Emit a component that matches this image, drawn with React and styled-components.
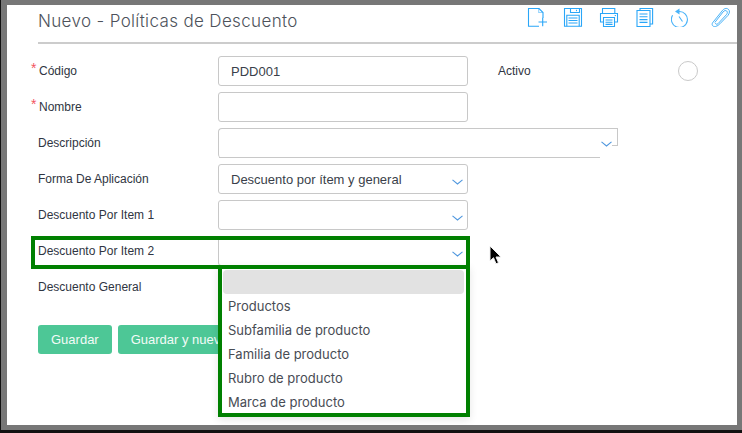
import React from 'react'
import styled, { createGlobalStyle } from 'styled-components'

const Global = createGlobalStyle`
  html, body {
    margin: 0;
    padding: 0;
    background: #111;
  }
  * { box-sizing: border-box; }
`

const Frame = styled.div`
  width: 741px;
  height: 430px;
  margin-left: 1px;
  padding: 5px 5px 5px 6px;
  background: #777;
`

const Page = styled.div`
  position: relative;
  height: 420px;
  background: #fff;
  overflow: hidden;
  font-family: "Liberation Sans", Arial, sans-serif;
`

const Header = styled.header`
  display: flex;
  justify-content: space-between;
  height: 39px;
  margin-left: 31px;
  border-bottom: 2px solid #ccc;
`

const Title = styled.h1`
  margin: 6px 0 0;
  font-family: "Inter", sans-serif;
  font-size: 17px;
  line-height: 21px;
  font-weight: 300;
  letter-spacing: 0.35px;
  color: #4d525b;
`

const Toolbar = styled.div`
  display: flex;
  gap: 16px;
  padding: 2px 6px 0 0;
  color: #2aa6f8;
  svg { display: block; }
`

const Form = styled.div`
  display: flex;
  flex-direction: column;
  gap: 6px;
  padding: 12px 0 0 31px;
`

const Row = styled.div`
  display: flex;
  align-items: center;
  height: 30px;
`

const Label = styled.label`
  position: relative;
  width: 180px;
  font-size: 12px;
  line-height: 16px;
  padding-left: ${(p) => (p.$required ? 1 : 0)}px;
  color: #2f3542;

  ${(p) => p.$required && `
    &::before {
      content: '*';
      position: absolute;
      left: -7px;
      top: -3px;
      color: #f2555f;
      font-size: 14px;
    }
  `}
`

const Field = styled.div`
  position: relative;
  display: flex;
  align-items: center;
  width: 250px;
  height: 30px;
  padding-left: 12px;
  border: 1px solid #c8c8c8;
  border-radius: 3px;
  font-size: 13px;
  color: #3a3f4a;
`

const WideField = styled(Field)`
  width: 400px;
  border-right: 0;
  border-bottom: 0;
  border-radius: 4px 0 0 4px;

  &::before {
    content: '';
    position: absolute;
    right: 0;
    top: 0;
    width: 1px;
    height: 17px;
    background: #c8c8c8;
  }
  &::after {
    content: '';
    position: absolute;
    left: 0;
    right: 18px;
    bottom: 0;
    height: 1px;
    background: #c8c8c8;
  }
  & > span {
    position: absolute;
    right: 0;
    top: 16px;
    width: 6px;
    height: 1px;
    background: #c8c8c8;
  }
`

const Plain = styled.div`
  width: 250px;
  height: 30px;
`

const Chevron = styled.svg`
  position: absolute;
  right: ${(p) => p.$right}px;
  top: ${(p) => p.$top}px;
  color: #4f97de;
`

const ActivoLabel = styled.span`
  margin-left: 30px;
  width: 180px;
  font-size: 12px;
  color: #2f3542;
`

const Radio = styled.span`
  width: 20px;
  height: 20px;
  border: 1px solid #c9c9c9;
  border-radius: 50%;
  background: #fff;
`

const Buttons = styled.div`
  display: flex;
  gap: 6px;
  padding: 23px 0 0 31px;
`

const Button = styled.button`
  height: 29px;
  padding: 0 13px;
  border: 0;
  border-radius: 3px;
  background: #4dc796;
  color: #f2fbf7;
  font-family: "Liberation Sans", Arial, sans-serif;
  font-size: 13px;
  white-space: nowrap;
`

const Highlight = styled.div`
  position: absolute;
  left: 24px;
  top: 231px;
  width: 439px;
  height: 33px;
  border: 4px solid #008000;
  pointer-events: none;
`

const Dropdown = styled.ul`
  position: absolute;
  left: 211px;
  top: 260px;
  width: 252px;
  height: 152px;
  margin: 0;
  padding: 1px 2px 0 1px;
  list-style: none;
  background: #fff;
  border: 4px solid #008000;
  box-shadow: 0 3px 8px rgba(0, 0, 0, 0.1);
`

const Option = styled.li`
  height: 24px;
  padding-left: 5px;
  border-radius: 4px;
  background: ${(p) => (p.$blank ? '#e2e2e2' : 'transparent')};
  font-family: "Inter", sans-serif;
  font-size: 13px;
  line-height: 24px;
  color: #484c54;
`

const Cursor = styled.svg`
  position: absolute;
  left: 481px;
  top: 240px;
`

function DownArrow({ right = 4, top = 14 }) {
  return (
    <Chevron $right={right} $top={top} width="11" height="6" viewBox="0 0 11 6" fill="none" stroke="currentColor" strokeWidth="1.1">
      <path d="M.5.8 5.500 5l5-4.200" />
    </Chevron>
  )
}

function NewFileIcon() {
  return (
    <svg width="20" height="20" viewBox="0 0 20 20" fill="none" stroke="currentColor" strokeWidth="1.1">
      <path d="M12 19.300H1.500V1.500h10.500l4 4V11" />
      <path d="M11.700 1.500v4h4" strokeOpacity=".5" />
      <path d="M11.500 15h8.500M15.700 10.800v8.500" />
    </svg>
  )
}

function SaveIcon() {
  return (
    <svg width="20" height="20" viewBox="0 0 20 20" fill="none" stroke="currentColor" strokeWidth="1.1">
      <path d="M1.500 1.500h17v17.800h-17z" />
      <path d="M7.500 1.500v4h9v-4" />
      <path d="M13.500 2.800v1.400" />
      <path d="M3.800 19.300V8.300h12.400v11" />
      <path d="M5.500 11h9M5.500 13.500h9M5.500 16h9" />
    </svg>
  )
}

function PrintIcon() {
  return (
    <svg width="20" height="20" viewBox="0 0 20 20" fill="none" stroke="currentColor" strokeWidth="1.1">
      <path d="M3.500 6.500V1.500h12.300v5" />
      <path d="M4 15H1.500V6.500h17V15H16" />
      <path d="M15.700 8.600h1.300" strokeWidth="1" />
      <path d="M4.500 10.500h11v9h-11z" />
      <path d="M6.500 13h7M6.500 15.200h7M6.500 17.400h7" />
    </svg>
  )
}

function CopyIcon() {
  return (
    <svg width="20" height="20" viewBox="0 0 20 20" fill="none" stroke="currentColor" strokeWidth="1.1">
      <path d="M2 3.500h13v16H2z" />
      <path d="M5 3.500v-2h12.600v15.500H15" />
      <path d="M4.500 7h8M4.500 9.800h8M4.500 12.600h8M4.500 15.400h8" />
    </svg>
  )
}

function HistoryIcon() {
  return (
    <svg width="20" height="20" viewBox="0 0 20 20" fill="none" stroke="currentColor" strokeWidth="1.1" opacity=".85">
      <path d="M8 4.500a8 8 0 1 1-6.400 3.800" />
      <path d="M8.500 1.500v6L4 4.500z" fill="currentColor" stroke="none" />
      <path d="M8 9.500l3.500 5" />
    </svg>
  )
}

function ClipIcon() {
  return (
    <svg width="24" height="20" viewBox="0 0 24 20" fill="none" stroke="currentColor" strokeWidth="1" opacity=".85">
      <path d="M8.500 19.500c-2.200.6-4.200-1.300-3-3.600L15 4c1.800-2.500 4.500-3.300 6.300-1.800 1.800 1.500 1.400 4-.4 6.300l-8 8.300c-1.400 1.400-2.600 2.300-4.400 2.700z" />
      <path d="M7.800 15.500 16 5c1.200-1.500 2.700-1.900 3.700-1 1 .9.800 2.300-.3 3.700L11 16.700c-1 1-2.600.6-2.600-.6" />
    </svg>
  )
}

const options = ['Productos', 'Subfamilia de producto', 'Familia de producto', 'Rubro de producto', 'Marca de producto']

export default function App() {
  return (
    <>
      <Global />
      <Frame>
        <Page>
          <Header>
            <Title>Nuevo - Políticas de Descuento</Title>
            <Toolbar>
              <NewFileIcon />
              <SaveIcon />
              <PrintIcon />
              <CopyIcon />
              <HistoryIcon />
              <ClipIcon />
            </Toolbar>
          </Header>

          <Form>
            <Row>
              <Label $required>Código</Label>
              <Field>PDD001</Field>
              <ActivoLabel>Activo</ActivoLabel>
              <Radio />
            </Row>
            <Row>
              <Label $required>Nombre</Label>
              <Field />
            </Row>
            <Row>
              <Label>Descripción</Label>
              <WideField>
                <span />
                <DownArrow right={6} top={12} />
              </WideField>
            </Row>
            <Row>
              <Label>Forma De Aplicación</Label>
              <Field>
                Descuento por ítem y general
                <DownArrow />
              </Field>
            </Row>
            <Row>
              <Label>Descuento Por Item 1</Label>
              <Field>
                <DownArrow />
              </Field>
            </Row>
            <Row>
              <Label>Descuento Por Item 2</Label>
              <Field>
                <DownArrow />
              </Field>
            </Row>
            <Row>
              <Label>Descuento General</Label>
              <Plain />
            </Row>
          </Form>

          <Buttons>
            <Button>Guardar</Button>
            <Button>Guardar y nuevo</Button>
          </Buttons>

          <Highlight />
          <Dropdown>
            <Option $blank />
            {options.map((o) => (
              <Option key={o}>{o}</Option>
            ))}
          </Dropdown>

          <Cursor width="16" height="22" viewBox="0 0 16 22">
            <path d="M2 1v15l3.500-3.300 2.500 6 2.500-1-2.500-5.700H13z" fill="#000" stroke="#eee" strokeWidth="1" />
          </Cursor>
        </Page>
      </Frame>
    </>
  )
}
